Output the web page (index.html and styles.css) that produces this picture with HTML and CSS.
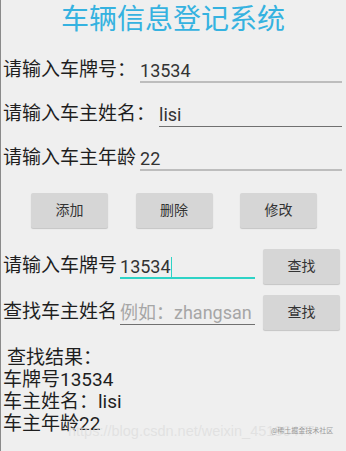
FILE: index.html
```html
<!DOCTYPE html>
<html>
<head>
<meta charset="utf-8">
<link rel="stylesheet" href="styles.css">
</head>
<body>
<div class="screen">
  <div class="title">车辆信息登记系统</div>
  <div class="row">
    <span class="label">请输入车牌号：</span>
    <div class="field light">13534</div>
  </div>
  <div class="row">
    <span class="label">请输入车主姓名：</span>
    <div class="field dark">lisi</div>
  </div>
  <div class="row">
    <span class="label">请输入车主年龄</span>
    <div class="field light">22</div>
  </div>
  <div class="buttons">
    <div class="btn">添加</div>
    <div class="btn">删除</div>
    <div class="btn">修改</div>
  </div>
  <div class="row search">
    <span class="label">请输入车牌号</span>
    <div class="field focus">13534<span class="cursor"></span></div>
    <div class="btn small">查找</div>
  </div>
  <div class="row search">
    <span class="label">查找车主姓名</span>
    <div class="field dark placeholder">例如：zhangsan</div>
    <div class="btn small">查找</div>
  </div>
  <div class="results">
    <div class="res-title">查找结果：</div>
    <div>车牌号13534</div>
    <div>车主姓名：lisi</div>
    <div>车主年龄22</div>
  </div>
  <div class="watermark">https://blog.csdn.net/weixin_45186477</div>
  <div class="juejin">@稀土掘金技术社区</div>
</div>
</body>
</html>
```
FILE: styles.css
```css
html, body {
  margin: 0;
  padding: 0;
}
body {
  width: 346px;
  height: 451px;
  overflow: hidden;
  background: #efefef;
  font-family: Roboto, "Noto Sans CJK SC", sans-serif;
}
.screen {
  position: relative;
  height: 451px;
  box-sizing: border-box;
  border-left: 1px solid #8a8a8a;
  padding-left: 2px;
  color: #1e1e1e;
}
.title {
  height: 48px;
  line-height: 40px;
  font-size: 28px;
  color: #35b2e0;
  text-align: center;
  margin-left: -3px;
}
.row {
  display: flex;
  align-items: center;
  height: 44px;
}
.label {
  font-size: 19px;
  line-height: 24px;
  white-space: nowrap;
}
.field {
  flex: 1;
  margin-left: 4px;
  margin-right: 4px;
  height: 26px;
  line-height: 24px;
  font-size: 18px;
  color: #333;
  box-sizing: border-box;
  padding-top: 2px;
  white-space: nowrap;
  overflow: hidden;
}
.field.light {
  border-bottom: 2px solid #bdbdbd;
}
.field.dark {
  border-bottom: 1px solid #707070;
}
.field.focus {
  border-bottom: 2px solid #2ed3c6;
}
.field.placeholder {
  color: #a6a6a6;
}
.cursor {
  display: inline-block;
  width: 1px;
  height: 20px;
  background: #2ed3c6;
  vertical-align: -4px;
}
.buttons {
  display: flex;
  justify-content: space-between;
  margin: 13px 29px 0 28px;
}
.btn {
  width: 77px;
  height: 35px;
  line-height: 35px;
  text-align: center;
  font-size: 14px;
  color: #333;
  background: #d6d6d6;
  border-radius: 2px;
  box-shadow: 0 1px 1px rgba(0,0,0,0.18);
}
.search {
  height: 46px;
}
.buttons + .search {
  margin-top: 15px;
}
.search .field {
  flex: 0 0 135px;
  margin-left: 3px;
  margin-right: 8px;
}
.results {
  margin-top: 12px;
  font-size: 19px;
  line-height: 22px;
}
.res-title {
  margin-left: 4px;
}
.watermark {
  position: absolute;
  left: 67px;
  top: 423px;
  font-family: "Liberation Sans", sans-serif;
  font-size: 14.5px;
  color: rgba(222,222,222,0.8);
  white-space: nowrap;
}
.juejin {
  position: absolute;
  left: 270px;
  top: 425px;
  font-size: 7px;
  color: #9a9a9a;
  white-space: nowrap;
}
```
